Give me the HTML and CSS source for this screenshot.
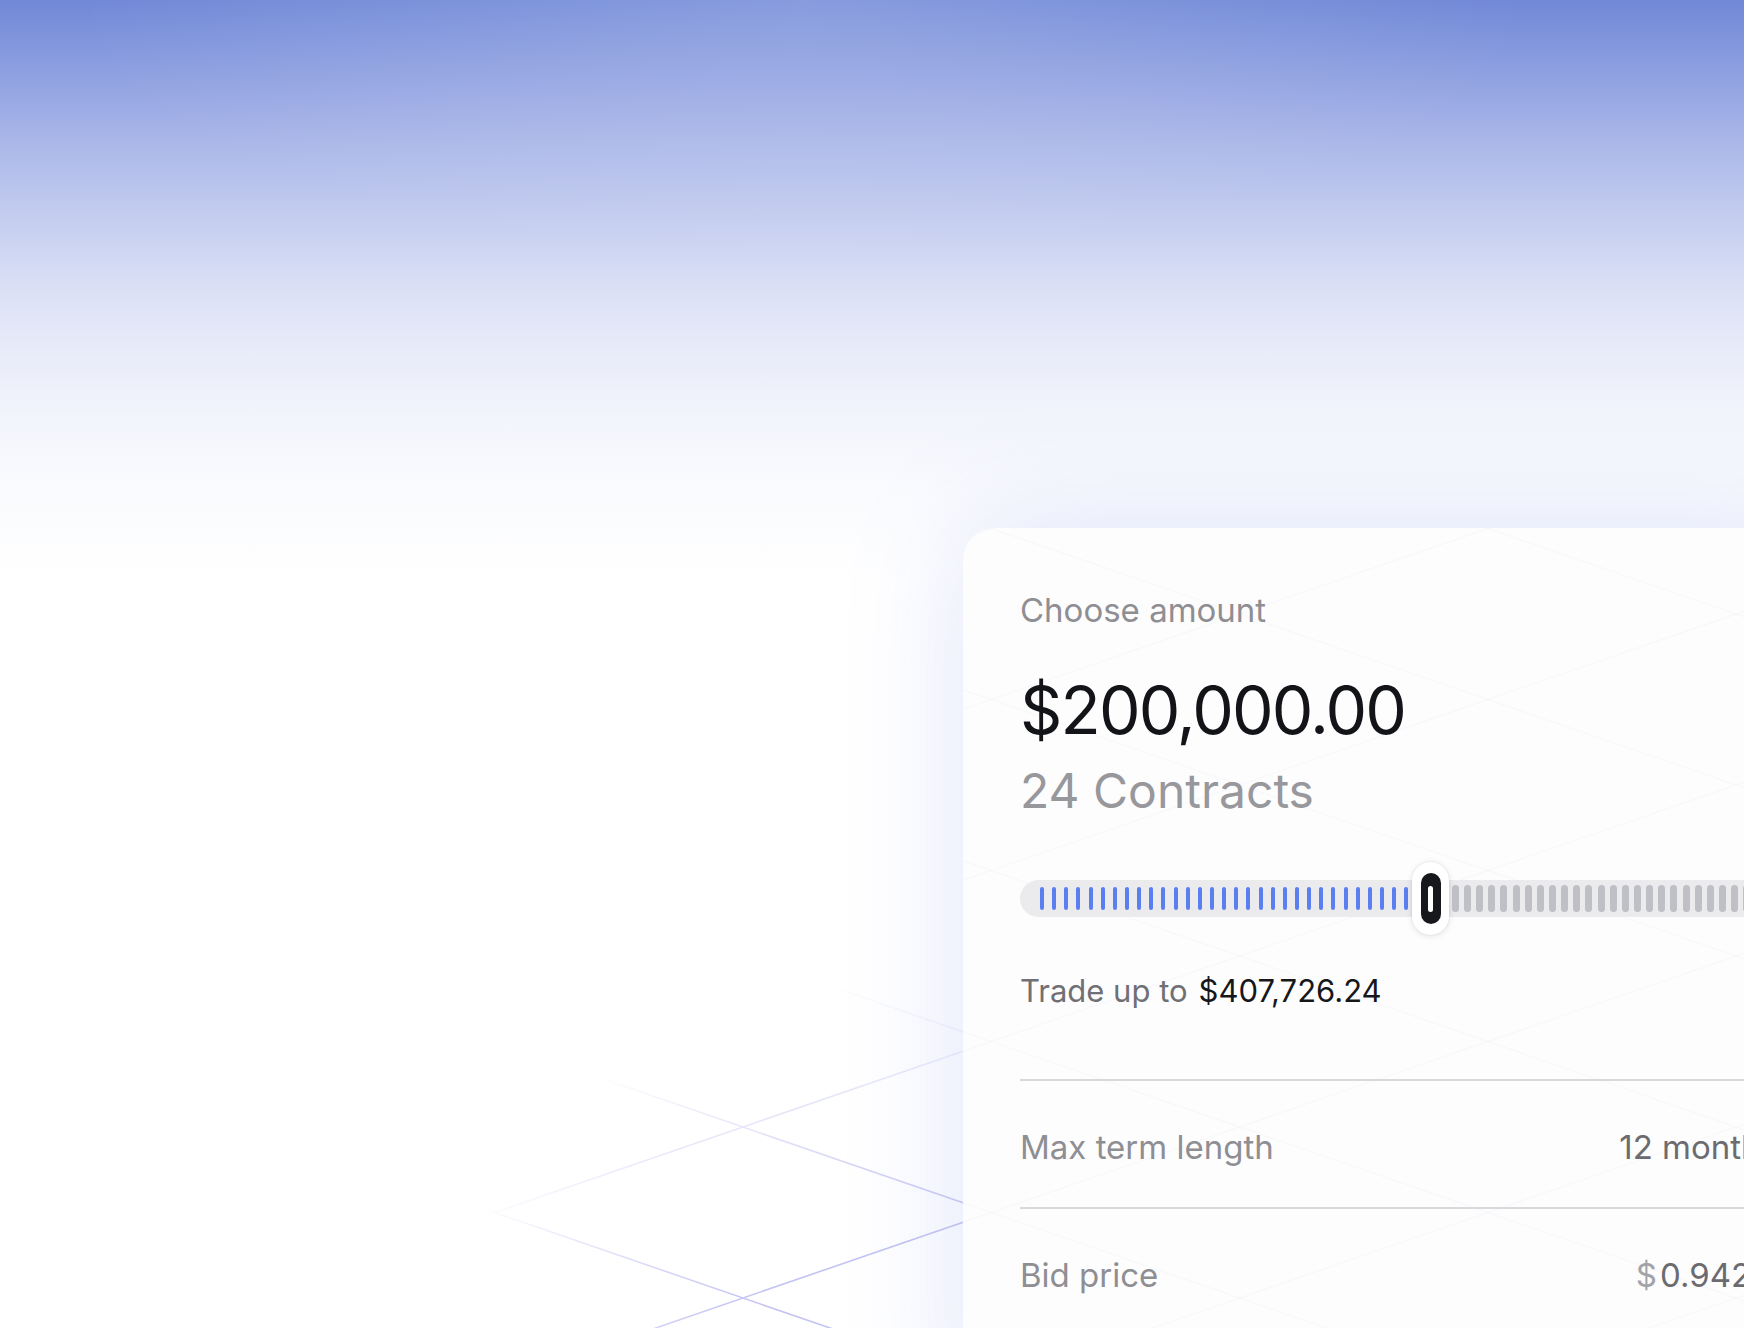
FILE: index.html
```html
<!DOCTYPE html>
<html lang="en">
<head>
<meta charset="utf-8">
<title>Choose amount</title>
<link rel="stylesheet" href="styles.css">
</head>
<body>
<div class="page">
  <svg class="lattice" width="1744" height="1328" viewBox="0 0 1744 1328" aria-hidden="true">
    <defs>
      <radialGradient id="fade" gradientUnits="userSpaceOnUse" cx="900" cy="1420" r="480" gradientTransform="translate(900 1420) scale(1 0.92) translate(-900 -1420)">
        <stop offset="0" stop-color="#fff"/>
        <stop offset="0.4" stop-color="#fff"/>
        <stop offset="1" stop-color="#000"/>
      </radialGradient>
      <mask id="latmask" maskUnits="userSpaceOnUse" x="0" y="0" width="1744" height="1328">
        <rect width="1744" height="1328" fill="url(#fade)"/>
      </mask>
    </defs>
    <g mask="url(#latmask)" class="lat-lines">
      <line x1="0" y1="358.2" x2="1835" y2="990"/>
      <line x1="0" y1="529.2" x2="1835" y2="1161"/>
      <line x1="0" y1="700.2" x2="1835" y2="1332"/>
      <line x1="0" y1="871.2" x2="1835" y2="1503"/>
      <line x1="0" y1="1042.2" x2="1835" y2="1674"/>
      <line x1="0" y1="1213.2" x2="1835" y2="1845"/>
      <line x1="0" y1="869.8" x2="1835" y2="238"/>
      <line x1="0" y1="1040.8" x2="1835" y2="409"/>
      <line x1="0" y1="1211.8" x2="1835" y2="580"/>
      <line x1="0" y1="1382.8" x2="1835" y2="751"/>
      <line x1="0" y1="1553.8" x2="1835" y2="922"/>
      <line x1="0" y1="1724.8" x2="1835" y2="1093"/>
    </g>
  </svg>

  <section class="card">
    <svg class="card-lattice" width="872" height="900" viewBox="963 528 872 900" aria-hidden="true">
      <g class="card-lat-lines">
        <line x1="0" y1="-154.8" x2="1835" y2="477"/>
        <line x1="0" y1="16.2" x2="1835" y2="648"/>
        <line x1="0" y1="187.2" x2="1835" y2="819"/>
        <line x1="0" y1="358.2" x2="1835" y2="990"/>
        <line x1="0" y1="529.2" x2="1835" y2="1161"/>
        <line x1="0" y1="700.2" x2="1835" y2="1332"/>
        <line x1="0" y1="871.2" x2="1835" y2="1503"/>
        <line x1="0" y1="1042.2" x2="1835" y2="1674"/>
        <line x1="0" y1="698.8" x2="1835" y2="67"/>
        <line x1="0" y1="869.8" x2="1835" y2="238"/>
        <line x1="0" y1="1040.8" x2="1835" y2="409"/>
        <line x1="0" y1="1211.8" x2="1835" y2="580"/>
        <line x1="0" y1="1382.8" x2="1835" y2="751"/>
        <line x1="0" y1="1553.8" x2="1835" y2="922"/>
        <line x1="0" y1="1724.8" x2="1835" y2="1093"/>
        <line x1="0" y1="1895.8" x2="1835" y2="1264"/>
        <line x1="0" y1="2066.8" x2="1835" y2="1435"/>
      </g>
    </svg>

    <div class="card-body">
      <div class="label">Choose amount</div>
      <div class="amount">$200,000.00</div>
      <div class="contracts">24 Contracts</div>

      <div class="slider">
        <div class="ticks ticks-on">
          <span class="tick"></span><span class="tick"></span><span class="tick"></span><span class="tick"></span><span class="tick"></span>
          <span class="tick"></span><span class="tick"></span><span class="tick"></span><span class="tick"></span><span class="tick"></span>
          <span class="tick"></span><span class="tick"></span><span class="tick"></span><span class="tick"></span><span class="tick"></span>
          <span class="tick"></span><span class="tick"></span><span class="tick"></span><span class="tick"></span><span class="tick"></span>
          <span class="tick"></span><span class="tick"></span><span class="tick"></span><span class="tick"></span><span class="tick"></span>
          <span class="tick"></span><span class="tick"></span><span class="tick"></span><span class="tick"></span><span class="tick"></span>
          <span class="tick"></span>
        </div>
        <div class="knob"><div class="knob-inner"><div class="knob-line"></div></div></div>
        <div class="ticks ticks-off">
          <span class="tick"></span><span class="tick"></span><span class="tick"></span><span class="tick"></span><span class="tick"></span>
          <span class="tick"></span><span class="tick"></span><span class="tick"></span><span class="tick"></span><span class="tick"></span>
          <span class="tick"></span><span class="tick"></span><span class="tick"></span><span class="tick"></span><span class="tick"></span>
          <span class="tick"></span><span class="tick"></span><span class="tick"></span><span class="tick"></span><span class="tick"></span>
          <span class="tick"></span><span class="tick"></span><span class="tick"></span><span class="tick"></span><span class="tick"></span>
        </div>
      </div>

      <div class="trade">
        <span class="trade-label">Trade up to</span>
        <span class="trade-value">$407,726.24</span>
      </div>

      <div class="row">
        <span class="row-label">Max term length</span>
        <span class="row-value">12 months</span>
      </div>
      <div class="row">
        <span class="row-label">Bid price</span>
        <span class="row-value"><span class="cur">$</span>0.94211</span>
      </div>
    </div>
  </section>
</div>
</body>
</html>
```

FILE: styles.css
```css
* { box-sizing: border-box; }

html, body {
  margin: 0;
  padding: 0;
}

body {
  width: 1744px;
  height: 1328px;
  overflow: hidden;
  font-family: Inter, "Noto Sans", "Liberation Sans", sans-serif;
  background-color: #ffffff;
  background-image:
    radial-gradient(ellipse 42% 260px at 46% 0, rgba(255,255,255,0.16), rgba(255,255,255,0)),
    linear-gradient(180deg,
      #7088d7 0px,
      #8d9fe0 70px,
      #a9b6e8 140px,
      #c2cbef 210px,
      #d8def5 280px,
      #e8ebf9 350px,
      #f3f5fc 420px,
      #fafbfe 490px,
      #ffffff 580px);
  background-repeat: no-repeat;
  background-size: 100% 600px, 100% 600px;
}

.page {
  position: relative;
  width: 1744px;
  height: 1328px;
  padding: 528px 0 0 963px;
}

.lattice {
  position: absolute;
  left: 0;
  top: 0;
  pointer-events: none;
}

.lat-lines line {
  stroke: #c3c4f2;
  stroke-width: 1.6;
}

.card {
  position: relative;
  width: 872px;
  height: 900px;
  background: #fdfdfe;
  border-radius: 32px 0 0 0;
  box-shadow: 0 0 120px 0 rgba(100, 118, 232, 0.2);
  overflow: hidden;
}

.card-lattice {
  position: absolute;
  left: 0;
  top: 0;
  pointer-events: none;
}

.card-lat-lines line {
  stroke: rgba(120, 122, 170, 0.03);
  stroke-width: 1.5;
}

.card-body {
  position: relative;
  padding: 63px 57px 0 57px;
}

.label {
  font-size: 33px;
  line-height: 38px;
  color: #8e8e93;
}

.amount {
  margin-top: 42px;
  font-size: 66px;
  line-height: 79px;
  color: #131418;
  letter-spacing: -0.028em;
}

.contracts {
  margin-top: 13px;
  font-size: 48px;
  line-height: 55px;
  color: #97979c;
}

.slider {
  margin-top: 62px;
  width: 758px;
  height: 37px;
  border-radius: 18.5px;
  background: #ebebee;
  padding-left: 16px;
  display: flex;
  align-items: center;
}

.ticks {
  display: flex;
  align-items: center;
  height: 100%;
}

.tick {
  width: 12.15px;
  flex: none;
  display: flex;
  justify-content: center;
}

.tick::before {
  content: "";
  display: block;
}

.ticks-on .tick::before {
  width: 4px;
  height: 23px;
  border-radius: 2px;
  background: #5b7fee;
}

.ticks-off .tick::before {
  width: 7px;
  height: 27px;
  border-radius: 3.5px;
  background: #bfc0c6;
}

.knob {
  flex: none;
  width: 37px;
  height: 73px;
  border-radius: 18.5px;
  background: #ffffff;
  box-shadow: 0 1px 6px rgba(20, 22, 40, 0.12), 0 0 0 1px rgba(20, 22, 40, 0.03);
  display: flex;
  align-items: center;
  justify-content: center;
}

.knob-inner {
  width: 20px;
  height: 51px;
  border-radius: 10px;
  background: #17181c;
  display: flex;
  align-items: center;
  justify-content: center;
}

.knob-line {
  width: 5px;
  height: 26px;
  border-radius: 3px;
  background: #ffffff;
}

.trade {
  margin-top: 56px;
  display: flex;
  gap: 11px;
  font-size: 31px;
  line-height: 36px;
}

.trade-label {
  color: #6f6f74;
}

.trade-value {
  color: #16171b;
}

.row {
  display: flex;
  justify-content: space-between;
  align-items: center;
  height: 128px;
  padding-top: 5px;
  border-top: 2px solid #d9d9dd;
  font-size: 33px;
  line-height: 38px;
}

.trade + .row {
  margin-top: 70px;
}

.row-label {
  color: #8e8e93;
}

.row-value {
  color: #6b6b70;
}

.cur {
  color: #a3a3a8;
  margin-right: 3px;
}
```
